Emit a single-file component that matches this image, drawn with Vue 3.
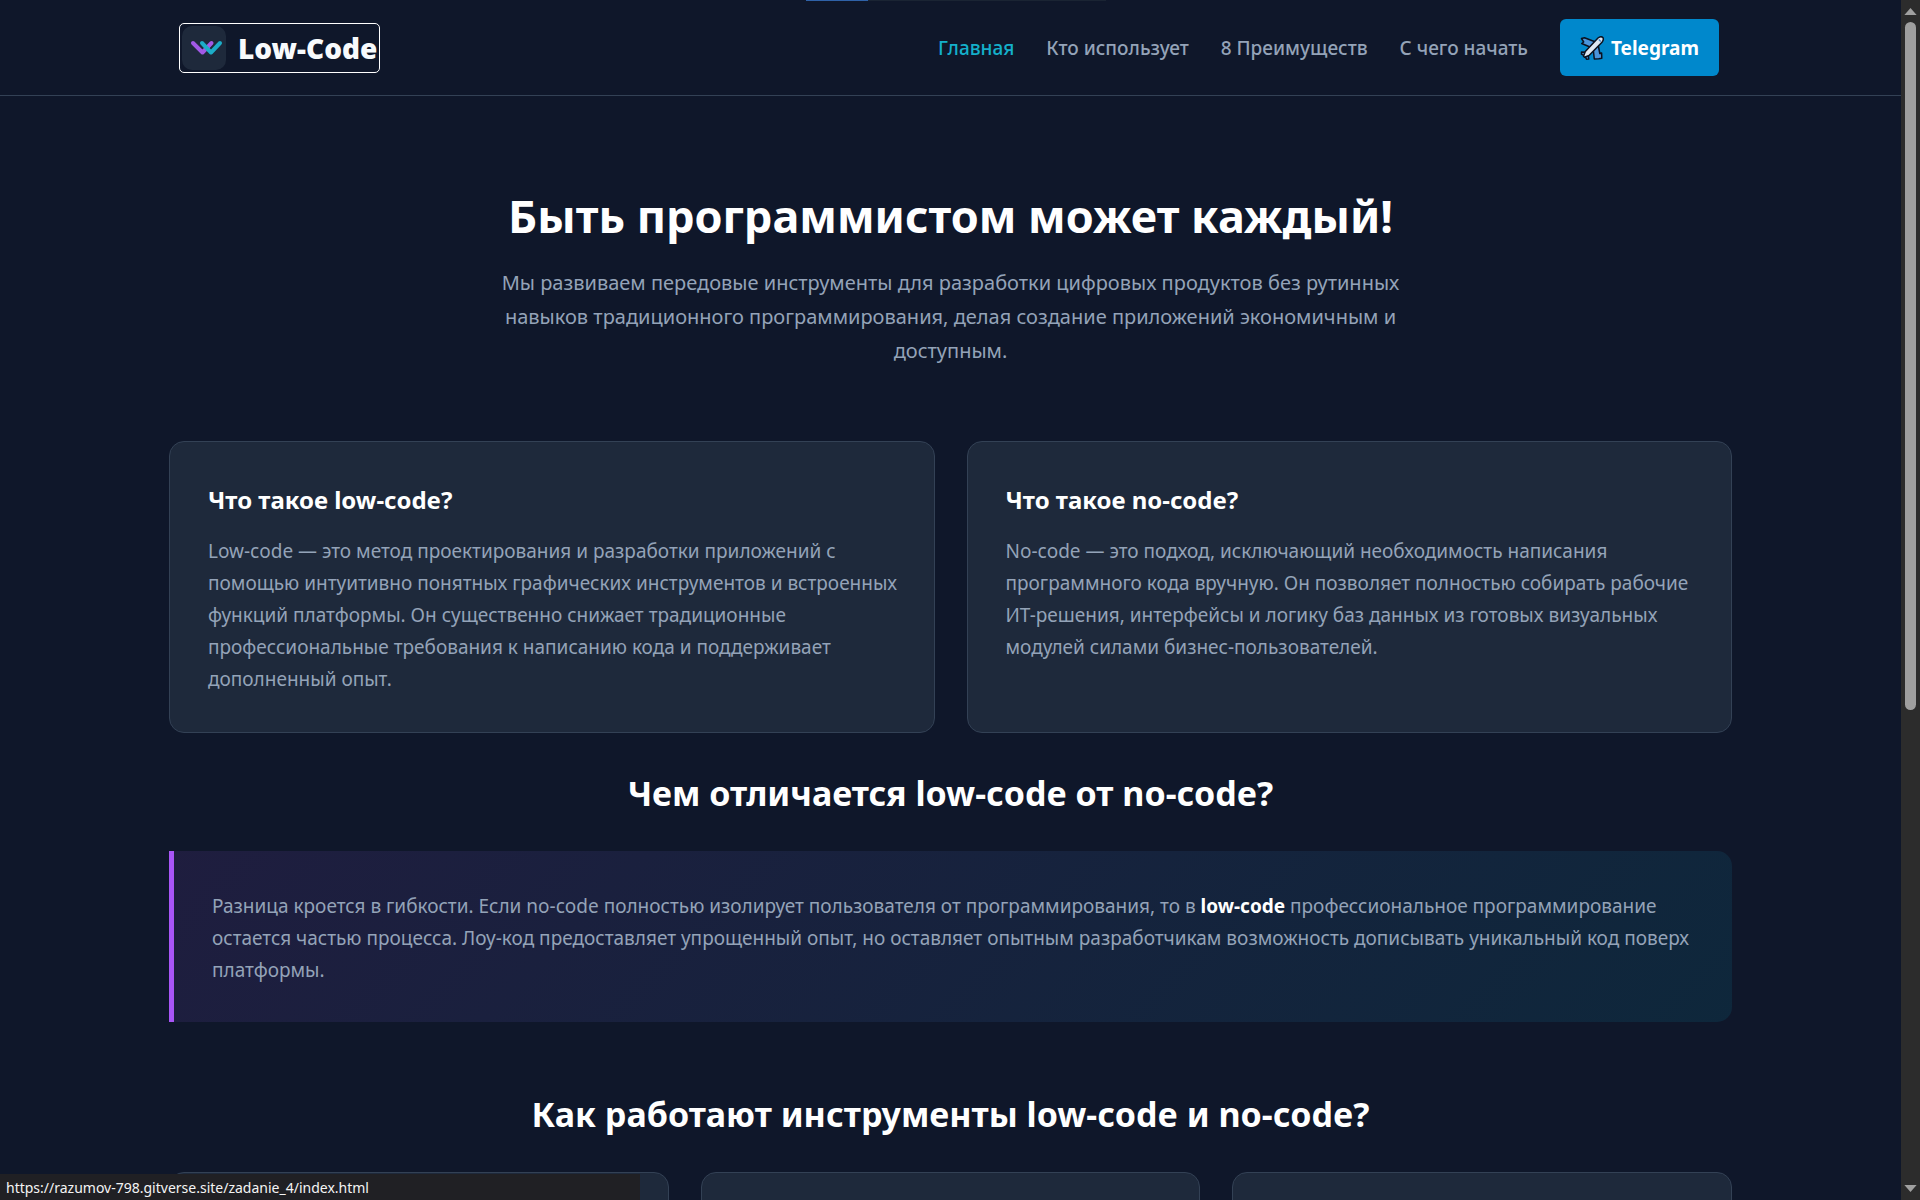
<script setup>
const links = [
  { label: 'Главная', active: true },
  { label: 'Кто использует' },
  { label: '8 Преимуществ' },
  { label: 'С чего начать' },
]

const definitions = [
  {
    title: 'Что такое low-code?',
    text: 'Low-code — это метод проектирования и разработки приложений с помощью интуитивно понятных графических инструментов и встроенных функций платформы. Он существенно снижает традиционные профессиональные требования к написанию кода и поддерживает дополненный опыт.',
  },
  {
    title: 'Что такое no-code?',
    text: 'No-code — это подход, исключающий необходимость написания программного кода вручную. Он позволяет полностью собирать рабочие ИТ-решения, интерфейсы и логику баз данных из готовых визуальных модулей силами бизнес-пользователей.',
  },
]
</script>

<template>
  <div class="window">
    <div class="page">
      <header class="header">
        <div class="container header-inner">
          <a class="logo" href="#">
            <svg class="logo-mark" viewBox="0 0 44 44" aria-hidden="true">
              <rect width="44" height="44" rx="10" fill="#1e293b" />
              <g fill="none" stroke-width="4" stroke-linecap="round" stroke-linejoin="round">
                <path d="M11 17l9.500 9.500 9-9.500" stroke="#a259e6" />
                <path d="M20 17l9 9.500 9-9.500" stroke="#1cadc8" />
              </g>
            </svg>
            <span>Low-Code</span>
          </a>
          <nav class="nav">
            <a
              v-for="link in links"
              :key="link.label"
              href="#"
              class="nav-link"
              :class="{ active: link.active }"
            >{{ link.label }}</a>
            <a class="telegram" href="#">
              <svg class="plane" viewBox="0 0 24 24" aria-hidden="true">
                <g stroke="#0b1220" stroke-width="1.500" stroke-linejoin="round">
                  <path d="M1.500 2.500l3-.8 10.500 4-5 5.300-8.300-3.500 2-1.500z" fill="#4a94dc" />
                  <path d="M21.800 22.300l-3 .5-4.500.2-1-9 5-4.500 1.500 8 1.800-.5z" fill="#4a94dc" />
                  <path d="M1.500 16l5 .3 1.500 1.500.8 5.200-2.300.2-1.500-3-3.500-2z" fill="#4a94dc" />
                  <path d="M18 2c2-1.500 4-1.300 4.800-.5.8 1 .7 2.800-.8 4.700L9 19.500l-4.500 1.800-1-1L5.300 15.500z" fill="#dfe8f2" />
                </g>
                <path d="M18.800 3.500l2 2" stroke="#3d83c8" stroke-width="1.200" />
              </svg>
              <span>Telegram</span>
            </a>
          </nav>
        </div>
      </header>

      <main class="container">
        <section class="hero">
          <h1>Быть программистом может каждый!</h1>
          <p>
            Мы развиваем передовые инструменты для разработки цифровых продуктов без рутинных
            навыков традиционного программирования, делая создание приложений экономичным и
            доступным.
          </p>
        </section>

        <section class="grid two">
          <article v-for="item in definitions" :key="item.title" class="card">
            <h3>{{ item.title }}</h3>
            <p>{{ item.text }}</p>
          </article>
        </section>

        <section class="difference">
          <h2>Чем отличается low-code от no-code?</h2>
          <div class="highlight">
            <p>
              Разница кроется в гибкости. Если no-code полностью изолирует пользователя от
              программирования, то в <strong>low-code</strong> профессиональное программирование
              остается частью процесса. Лоу-код предоставляет упрощенный опыт, но оставляет опытным
              разработчикам возможность дописывать уникальный код поверх платформы.
            </p>
          </div>
        </section>

        <section class="tools">
          <h2>Как работают инструменты low-code и no-code?</h2>
          <div class="grid three">
            <article v-for="n in 3" :key="n" class="card tall"></article>
          </div>
        </section>
      </main>
    </div>

    <div class="scrollbar" aria-hidden="true">
      <svg viewBox="0 0 14 8"><path d="M7 0l7 8H0z" /></svg>
      <div class="track"><div class="thumb"></div></div>
      <svg viewBox="0 0 14 8"><path d="M7 8L0 0h14z" /></svg>
    </div>

    <div class="top-strip" aria-hidden="true"></div>
    <div class="status">https://razumov-798.gitverse.site/zadanie_4/index.html</div>
  </div>
</template>

<style>
body {
  margin: 0;
  background: #0f172a;
}
</style>

<style scoped>
* {
  box-sizing: border-box;
}

.window {
  position: relative;
  display: flex;
  height: 100vh;
  overflow: hidden;
  background: #0f172a;
  color: #94a3b8;
  font-family: 'Noto Sans', 'Open Sans', sans-serif;
  font-size: 19px;
  line-height: 32px;
}

.page {
  flex: 1;
  min-width: 0;
  overflow: hidden;
}

.container {
  width: 100%;
  max-width: 1563px;
  margin: 0 auto;
}

h1,
h2,
h3,
p {
  margin: 0;
}

h1,
h2,
h3,
strong {
  color: #fff;
  font-weight: 700;
}

a {
  text-decoration: none;
}

.header {
  padding: 19px 0;
  border-bottom: 1px solid #334155;
}

.header-inner {
  display: flex;
  align-items: center;
  justify-content: space-between;
  padding: 0 13px 0 10px;
}

.logo {
  display: flex;
  align-items: center;
  gap: 12px;
  padding: 2px;
  border: 1px solid #fff;
  border-radius: 5px;
  color: #f8fafc;
  font-size: 28px;
  font-weight: 900;
}

.logo-mark {
  width: 44px;
  height: 44px;
}

.nav {
  display: flex;
  align-items: center;
  gap: 32px;
}

.nav-link {
  color: #94a3b8;
  font-weight: 500;
}

.nav-link.active {
  color: #14b0cb;
}

.telegram {
  display: flex;
  align-items: center;
  gap: 7px;
  height: 57px;
  padding: 0 20px;
  border-radius: 6px;
  background: #0088cc;
  color: #fff;
  font-weight: 700;
}

.plane {
  width: 24px;
  height: 24px;
}

.hero {
  max-width: 936px;
  margin: 0 auto;
  padding: 87px 0 73px;
  text-align: center;
}

h1 {
  margin-bottom: 17px;
  font-size: 45px;
  line-height: 66px;
}

.hero p {
  font-size: 20px;
  line-height: 34px;
}

.grid {
  display: grid;
  gap: 32px;
}

.two {
  grid-template-columns: 1fr 1fr;
}

.three {
  grid-template-columns: 1fr 1fr 1fr;
}

.card {
  padding: 38px 28px 37px 38px;
  border: 1px solid #334155;
  border-radius: 15px;
  background: #1e293b;
}

.tall {
  height: 320px;
}

h3 {
  margin-bottom: 15px;
  font-size: 24px;
  line-height: 40px;
}

h2 {
  font-size: 34px;
  line-height: 56px;
  text-align: center;
}

.difference {
  padding-top: 32px;
}

.difference h2,
.tools h2 {
  margin-bottom: 30px;
}

.highlight {
  padding: 39px 38px 36px;
  border-left: 5px solid #a855f7;
  border-radius: 0 15px 15px 0;
  background: linear-gradient(135deg, rgba(168, 85, 247, 0.1), rgba(6, 182, 212, 0.1));
}

.tools {
  padding-top: 64px;
}

.scrollbar {
  display: flex;
  flex-direction: column;
  align-items: center;
  gap: 7px;
  width: 19px;
  padding: 8px 0;
  background: #2c2c2c;
}

.scrollbar svg {
  width: 13px;
  height: 7px;
  fill: #a0a0a0;
}

.track {
  flex: 1;
  width: 11px;
}

.thumb {
  height: 59.500%;
  border-radius: 6px;
  background: #9f9f9f;
}

.top-strip {
  position: absolute;
  top: 0;
  left: 42%;
  width: 300px;
  height: 1px;
  background: linear-gradient(90deg, #2f62a8 62px, #1a2433 62px);
}

.status {
  position: absolute;
  bottom: 0;
  left: 0;
  width: 640px;
  height: 26px;
  padding-left: 6px;
  background: #202024;
  color: #f4f4f4;
  font-size: 14px;
  line-height: 28px;
}
</style>
